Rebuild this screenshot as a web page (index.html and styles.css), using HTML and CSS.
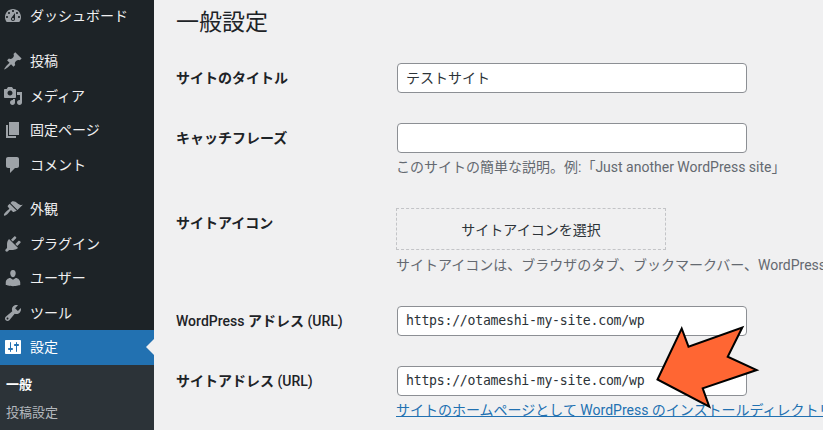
FILE: index.html
```html
<!DOCTYPE html>
<html lang="ja">
<head>
    <meta charset="UTF-8">
    <meta name="viewport" content="width=device-width, initial-scale=1.0">
    <title>一般設定</title>
    <link rel="stylesheet" href="styles.css">
</head>
<body>
    <nav class="sidebar">
        <ul class="menu">
            <li class="menu-item">
                <svg class="menu-icon" viewBox="0 0 20 20"><path d="M3.76 16h12.48c1.1-1.37 1.76-3.11 1.76-5 0-4.42-3.58-8-8-8s-8 3.58-8 8c0 1.89.66 3.63 1.76 5zM10 4c.55 0 1 .45 1 1s-.45 1-1 1-1-.45-1-1 .45-1 1-1zM6 6c.55 0 1 .45 1 1s-.45 1-1 1-1-.45-1-1 .45-1 1-1zm8 0c.55 0 1 .45 1 1s-.45 1-1 1-1-.45-1-1 .45-1 1-1zm-5.37 5.55L12 7v6c0 1.1-.9 2-2 2s-2-.9-2-2c0-.57.24-1.08.63-1.45zM4 10c.55 0 1 .45 1 1s-.45 1-1 1-1-.45-1-1 .45-1 1-1zm12 0c.55 0 1 .45 1 1s-.45 1-1 1-1-.45-1-1 .45-1 1-1zm-5 3c0-.55-.45-1-1-1s-1 .45-1 1 .45 1 1 1 1-.45 1-1z"/></svg>
                <span class="menu-label">ダッシュボード</span>
            </li>
            <li class="menu-item menu-group">
                <svg class="menu-icon" viewBox="0 0 20 20"><path d="M10.44 3.02l1.82-1.82 6.36 6.35-1.83 1.82c-1.05-.68-2.48-.57-3.41.36l-.75.75c-.92.93-1.04 2.35-.35 3.41l-1.83 1.82-2.41-2.41-2.8 2.79c-.42.42-3.38 2.71-3.8 2.29s1.86-3.39 2.28-3.81l2.79-2.79L4.1 9.36l1.83-1.82c1.05.69 2.48.57 3.4-.36l.75-.75c.93-.92 1.05-2.35.36-3.41z"/></svg>
                <span class="menu-label">投稿</span>
            </li>
            <li class="menu-item">
                <svg class="menu-icon" viewBox="0 0 20 20"><path d="M13 11V4c0-.55-.45-1-1-1h-1.67L9 1H5L3.67 3H2c-.55 0-1 .45-1 1v7c0 .55.45 1 1 1h10c.55 0 1-.45 1-1zM7 4.5c1.38 0 2.5 1.12 2.5 2.5S8.38 9.5 7 9.5 4.5 8.38 4.5 7 5.62 4.5 7 4.5zM14 6h5v10.5c0 1.38-1.12 2.5-2.5 2.5S14 17.88 14 16.5s1.12-2.5 2.5-2.5c.17 0 .34.02.5.05V9h-3V6zm-4 8.05V13h2v3.5c0 1.38-1.12 2.5-2.5 2.5S7 17.88 7 16.5 8.12 14 9.5 14c.17 0 .34.02.5.05z"/></svg>
                <span class="menu-label">メディア</span>
            </li>
            <li class="menu-item">
                <svg class="menu-icon" viewBox="0 0 20 20"><path d="M6 15V2h10v13H6zm-1 1h8v2H3V5h2v11z"/></svg>
                <span class="menu-label">固定ページ</span>
            </li>
            <li class="menu-item">
                <svg class="menu-icon" viewBox="0 0 20 20"><path d="M5 2h9c1.1 0 2 .9 2 2v7c0 1.1-.9 2-2 2h-2l-5 5v-5H5c-1.1 0-2-.9-2-2V4c0-1.1.9-2 2-2z"/></svg>
                <span class="menu-label">コメント</span>
            </li>
            <li class="menu-item menu-group">
                <svg class="menu-icon" viewBox="0 0 20 20"><path d="M14.48 11.06L7.41 3.99l1.5-1.5c.5-.56 2.3-.47 3.51.32 1.21.8 1.43 1.28 2.91 2.1 1.18.64 2.45 1.26 4.45.85zm-.71.71L6.7 4.7 4.93 6.47c-.39.39-.39 1.02 0 1.41l1.06 1.06c.39.39.39 1.03 0 1.42-.6.6-1.43 1.11-2.21 1.69-.35.26-.7.53-1.01.84-1.34 1.34-2.37 2.95-1.67 3.65.71.7 2.3-.32 3.65-1.67.31-.31.58-.66.85-1.01.57-.78 1.08-1.61 1.7-2.21.39-.39 1.02-.39 1.41 0l1.06 1.06c.39.39 1.02.39 1.41 0z"/></svg>
                <span class="menu-label">外観</span>
            </li>
            <li class="menu-item">
                <svg class="menu-icon" viewBox="0 0 20 20"><path d="M13.11 4.36L9.87 7.6 8 5.73l3.24-3.24c.35-.34 1.05-.2 1.56.32.52.51.66 1.21.31 1.55zm-8 1.77l.91-1.12 9.01 9.01-1.19.84c-.71.71-2.63 1.16-3.82 1.16H6.14L4.9 17.26c-.59.59-1.54.59-2.12 0-.59-.58-.59-1.53 0-2.12l1.24-1.24v-3.88c0-1.13.4-3.19 1.09-3.89zm7.26 3.97l3.24-3.24c.34-.35 1.04-.21 1.55.31.52.51.66 1.21.31 1.55l-3.24 3.25z"/></svg>
                <span class="menu-label">プラグイン</span>
            </li>
            <li class="menu-item">
                <svg class="menu-icon" viewBox="0 0 20 20"><path d="M10 9.25c-2.27 0-2.73-3.44-2.73-3.44C7 4.02 7.82 2 9.97 2c2.16 0 2.98 2.02 2.71 3.81 0 0-.41 3.44-2.68 3.44zm0 2.57L12.72 10c2.39 0 4.52 2.33 4.52 4.53v2.49s-3.65 1.13-7.24 1.13c-3.65 0-7.24-1.13-7.24-1.13v-2.49c0-2.25 1.94-4.48 4.47-4.48z"/></svg>
                <span class="menu-label">ユーザー</span>
            </li>
            <li class="menu-item">
                <svg class="menu-icon" viewBox="0 0 20 20"><path d="M16.68 9.77c-1.34 1.34-3.3 1.67-4.95.99l-5.41 6.52c-.99.99-2.59.99-3.58 0s-.99-2.59 0-3.57l6.52-5.42c-.68-1.65-.35-3.61.99-4.95 1.28-1.28 3.12-1.62 4.72-1.06l-2.89 2.89 2.82 2.82 2.86-2.87c.53 1.58.18 3.39-1.08 4.65zM3.81 16.21c.4.39 1.04.39 1.43 0 .4-.4.4-1.04 0-1.43-.39-.4-1.03-.4-1.43 0-.39.39-.39 1.03 0 1.43z"/></svg>
                <span class="menu-label">ツール</span>
            </li>
            <li class="menu-item active">
                <svg class="menu-icon" viewBox="0 0 20 20"><path d="M18 16V4c0-.55-.45-1-1-1H3c-.55 0-1 .45-1 1v12c0 .55.45 1 1 1h14c.55 0 1-.45 1-1zM8 11h1c.55 0 1 .45 1 1s-.45 1-1 1H8v1.5c0 .28-.22.5-.5.5s-.5-.22-.5-.5V13H6c-.55 0-1-.45-1-1s.45-1 1-1h1V5.5c0-.28.22-.5.5-.5s.5.22.5.5V11zm5-2h-1c-.55 0-1-.45-1-1s.45-1 1-1h1V5.5c0-.28.22-.5.5-.5s.5.22.5.5V7h1c.55 0 1 .45 1 1s-.45 1-1 1h-1v5.5c0 .28-.22.5-.5.5s-.5-.22-.5-.5V9z"/></svg>
                <span class="menu-label">設定</span>
            </li>
        </ul>
        <ul class="submenu">
            <li class="current">一般</li>
            <li>投稿設定</li>
        </ul>
    </nav>

    <main class="content">
        <h1>一般設定</h1>
        <div class="form">
            <div class="row">
                <label>サイトのタイトル</label>
                <div class="field"><input class="text-input" type="text" value="テストサイト"></div>
            </div>
            <div class="row">
                <label>キャッチフレーズ</label>
                <div class="field">
                    <input class="text-input" type="text">
                    <p class="desc">このサイトの簡単な説明。例:「Just another WordPress site」</p>
                </div>
            </div>
            <div class="row">
                <label>サイトアイコン</label>
                <div class="field">
                    <button class="icon-select" type="button">サイトアイコンを選択</button>
                    <p class="desc">サイトアイコンは、ブラウザのタブ、ブックマークバー、WordPress モバイルアプリで表示されます。</p>
                </div>
            </div>
            <div class="row">
                <label><span class="latin">WordPress</span> アドレス <span class="latin">(URL)</span></label>
                <div class="field"><input class="text-input code" type="text" value="https://otameshi-my-site.com/wp"></div>
            </div>
            <div class="row">
                <label>サイトアドレス <span class="latin">(URL)</span></label>
                <div class="field">
                    <input class="text-input code" type="text" value="https://otameshi-my-site.com/wp">
                    <p class="desc"><a href="#">サイトのホームページとして WordPress のインストールディレクトリとは異なる場所を設定する場合</a></p>
                </div>
            </div>
        </div>
    </main>

    <!-- 注釈の矢印 -->
    <svg class="arrow" viewBox="0 0 823 430">
        <polygon points="657.5,379.5 681.7,328.5 688.5,346.7 742.3,327.5 727.7,356.7 756.7,370 702.7,388.3 709.3,406.7"/>
    </svg>
</body>
</html>
```

FILE: styles.css
```css
* {
    margin: 0;
    padding: 0;
    box-sizing: border-box;
}

body {
    position: relative;
    display: flex;
    height: 430px;
    overflow: hidden;
    background-color: #f0f0f1;
    color: #1d2327;
    font-family: Roboto, "Noto Sans CJK JP", sans-serif;
    font-size: 14px;
}

/* サイドバー */
.sidebar {
    display: flex;
    flex-direction: column;
    flex: 0 0 154px;
    background-color: #1d2327;
}

.menu {
    list-style: none;
    margin-top: -1px;
}

.menu-item {
    position: relative;
    display: flex;
    align-items: center;
    gap: 7px;
    height: 34.5px;
    padding-left: 3px;
    color: #f0f0f1;
    white-space: nowrap;
}

.menu-group {
    margin-top: 10.25px;
}

.menu-icon {
    flex: 0 0 20px;
    width: 20px;
    height: 20px;
    fill: #9ea3a8;
}

.menu-label {
    margin-bottom: 2px;
}

.menu-item.active {
    background-color: #2271b1;
    color: #fff;
}

.menu-item.active .menu-icon {
    fill: #fff;
}

.menu-item.active::after {
    content: '';
    position: absolute;
    right: 0;
    top: 50%;
    margin-top: -8px;
    border: 8px solid transparent;
    border-right-color: #f0f0f1;
    border-left-width: 0;
}

.submenu {
    flex: 1;
    list-style: none;
    background-color: #2c3338;
    padding-top: 6px;
    font-size: 13px;
    color: #b4b9be;
}

.submenu li {
    height: 28px;
    line-height: 28px;
    padding-left: 6px;
}

.submenu .current {
    color: #fff;
    font-weight: 700;
}

/* メイン */
.content {
    flex: 1;
    min-width: 0;
    padding: 6px 0 0 22px;
    white-space: nowrap;
}

h1 {
    font-size: 23px;
    font-weight: 400;
    line-height: 34px;
    margin-bottom: 23px;
}

.form {
    display: flex;
    flex-direction: column;
    gap: 30px;
}

.row {
    display: grid;
    grid-template-columns: 220px 1fr;
}

.row label {
    font-weight: 700;
    line-height: 30px;
}

.row label .latin {
    font-weight: 500;
}

.text-input {
    display: block;
    width: 350px;
    height: 30px;
    margin: 0 1px;
    padding: 0 8px 2px;
    background-color: #fff;
    border: 1px solid #8c8f94;
    border-radius: 4px;
    color: #2c3338;
    font-family: inherit;
    font-size: 14px;
}

.text-input.code {
    font-family: "DejaVu Sans Mono", "Liberation Mono", monospace;
    font-size: 13.2px;
    letter-spacing: -0.25px;
}

.icon-select {
    display: block;
    width: 270px;
    height: 42px;
    margin-bottom: 5px;
    background: transparent;
    border: 1px dashed #c3c4c7;
    color: #2c3338;
    font-family: inherit;
    font-size: 14px;
}

.desc {
    margin-top: 4px;
    color: #646970;
    line-height: 21px;
}

.icon-select + .desc {
    margin-top: 0;
}

.desc a {
    color: #2271b1;
}

.arrow {
    position: absolute;
    left: 0;
    top: 0;
    width: 823px;
    height: 430px;
    pointer-events: none;
}

.arrow polygon {
    fill: #ff6633;
    stroke: #000;
    stroke-width: 2;
}
```
